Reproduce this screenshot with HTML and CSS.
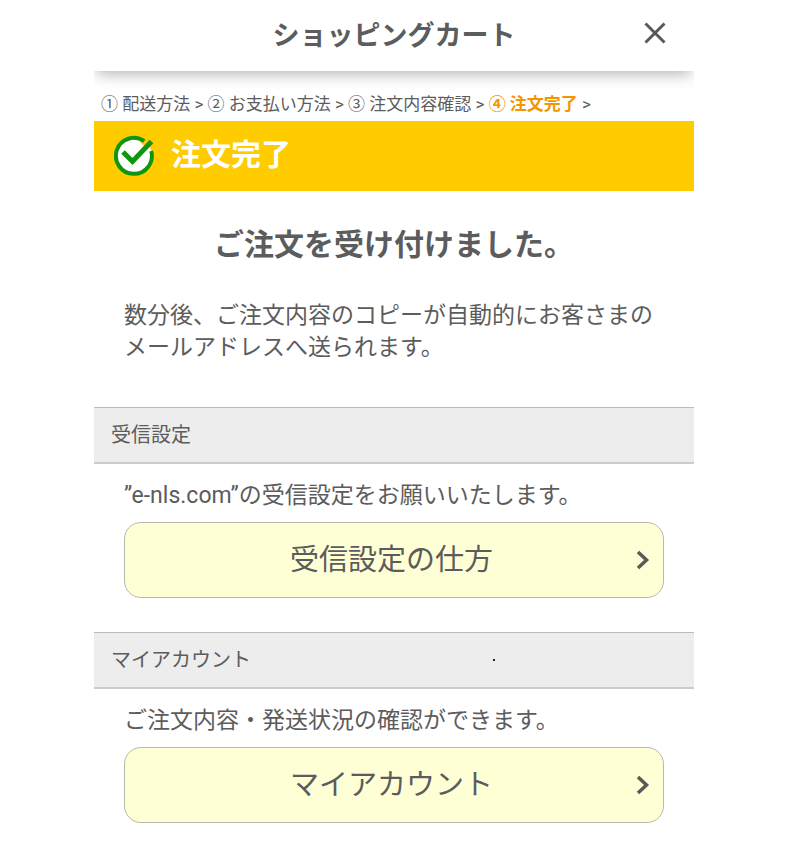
FILE: index.html
```html
<!DOCTYPE html>
<html lang="ja">
<head>
<meta charset="utf-8">
<meta name="viewport" content="width=device-width, initial-scale=1">
<title>ショッピングカート</title>
<link rel="stylesheet" href="styles.css">
</head>
<body>
<header class="header">
  <h1 class="header-title">ショッピングカート</h1>
  <button class="close" type="button" aria-label="閉じる">
    <svg width="22" height="22" viewBox="0 0 22 22" aria-hidden="true"><path d="M1.5 1.5 20.5 20.5M20.5 1.5 1.5 20.5"/></svg>
  </button>
</header>
<main>
  <nav class="steps">① 配送方法 &gt; ② お支払い方法 &gt; ③ 注文内容確認 &gt; <strong class="current">④ 注文完了</strong> &gt;</nav>
  <div class="banner">
    <svg class="check" width="40" height="42" viewBox="0 0 40 42" aria-hidden="true">
      <circle class="disc" cx="20" cy="22" r="18"/>
      <path class="gap" d="M29 11 38 2"/>
      <path class="ring" d="M30.3 7.2A18 18 0 1 0 37.2 17"/>
      <path class="tick" d="M9 18 18.5 27.5 37.5 7.5"/>
    </svg>
    <h2 class="banner-title">注文完了</h2>
  </div>
  <section class="message">
    <h2 class="message-title">ご注文を受け付けました。</h2>
    <p class="text">数分後、ご注文内容のコピーが自動的にお客さまの<br>メールアドレスへ送られます。</p>
  </section>
  <section class="block">
    <h3 class="block-title">受信設定</h3>
    <div class="block-body">
      <p class="text">”e-nls.com”の受信設定をお願いいたします。</p>
      <a class="link-button" href="#mail">受信設定の仕方
        <svg class="arrow" width="14" height="20" viewBox="0 0 14 20" aria-hidden="true"><path d="M2 2 10.5 10 2 18"/></svg>
      </a>
    </div>
  </section>
  <section class="block">
    <h3 class="block-title">マイアカウント<span class="dot"></span></h3>
    <div class="block-body">
      <p class="text">ご注文内容・発送状況の確認ができます。</p>
      <a class="link-button" href="#account">マイアカウント
        <svg class="arrow" width="14" height="20" viewBox="0 0 14 20" aria-hidden="true"><path d="M2 2 10.5 10 2 18"/></svg>
      </a>
    </div>
  </section>
</main>
</body>
</html>
```
FILE: styles.css
```css
* {
  box-sizing: border-box;
}

body {
  margin: 0;
  padding: 0 106px 0 94px;
  background: #fff;
  color: #5c5c5c;
  font-family: Roboto, "Noto Sans CJK JP", sans-serif;
}

h1, h2, h3, p {
  margin: 0;
}

.header {
  display: grid;
  grid-template-columns: 50px 1fr 50px;
  align-items: center;
  height: 71px;
  background: #fff;
  box-shadow: 0 6px 14px -3px rgba(0, 0, 0, 0.3);
  clip-path: inset(0 0 -30px 0);
}

.header-title {
  grid-column: 2;
  font-size: 27px;
  line-height: 40px;
  text-align: center;
}

.close {
  display: flex;
  padding: 0 0 6px;
  border: 0;
  background: none;
  cursor: pointer;
}

.close svg {
  fill: none;
  stroke: #595959;
  stroke-width: 3;
}

.steps {
  padding: 21px 7px 5px;
  font-size: 17px;
  line-height: 24px;
  white-space: nowrap;
}

.current {
  color: #f29600;
}

.banner {
  display: flex;
  align-items: center;
  gap: 17px;
  height: 70px;
  padding: 0 20px 2px;
  background: #fc0;
  color: #fff;
}

.check {
  fill: none;
}

.disc {
  fill: #fff;
}

.gap {
  stroke: #fc0;
  stroke-width: 9;
}

.ring {
  stroke: #0e960e;
  stroke-width: 4;
}

.tick {
  stroke: #0e960e;
  stroke-width: 5;
}

.banner-title,
.message-title {
  font-size: 30px;
  line-height: 40px;
}

.message {
  padding: 34px 30px 43px;
}

.message-title {
  margin-bottom: 35px;
  text-align: center;
}

.text {
  font-size: 23px;
  line-height: 32px;
}

.block-title {
  display: grid;
  grid-template-columns: 27fr 13fr;
  align-items: center;
  height: 57px;
  padding: 0 17px;
  border-top: 1px solid #bbb;
  border-bottom: 2px solid #ccc;
  background: #ededed;
  font-size: 20px;
  font-weight: 400;
  line-height: 30px;
}

.dot {
  width: 2px;
  height: 2px;
  background: #222;
}

.block-body {
  padding: 16px 30px 34px;
}

.link-button {
  display: flex;
  align-items: center;
  justify-content: center;
  position: relative;
  height: 76px;
  margin-top: 10px;
  padding-right: 5px;
  border: 1px solid #b8b8ac;
  border-radius: 17px;
  background: #ffffd6;
  color: #5c5c5c;
  font-size: 29px;
  line-height: 42px;
  text-decoration: none;
}

.arrow {
  position: absolute;
  right: 13px;
  fill: none;
  stroke: #595959;
  stroke-width: 3.5;
}
```
